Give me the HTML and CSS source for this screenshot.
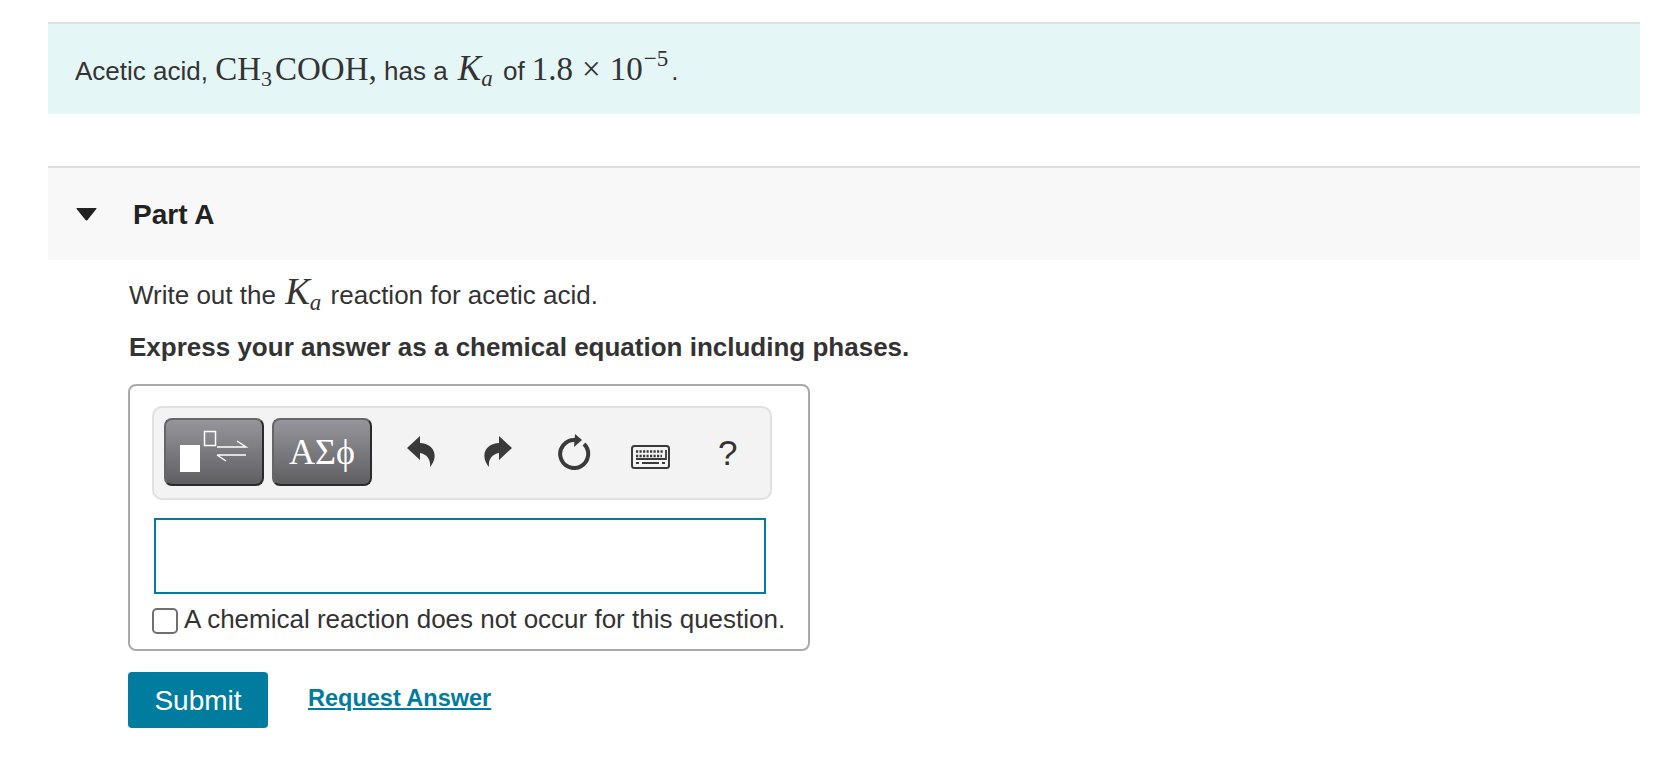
FILE: index.html
```html
<!DOCTYPE html>
<html lang="en">
<head>
<meta charset="utf-8">
<title>Acetic acid</title>
<link rel="stylesheet" href="styles.css">
</head>
<body>
<main class="page">
  <section class="intro">
    <p>Acetic acid, <span class="math">CH<sub class="three">3</sub>COOH,</span> has a <span class="math ka"><i>K<sub>a</sub></i></span> of <span class="math">1.8<span class="times">×</span>10<sup>−5</sup></span>.</p>
  </section>
  <section class="part">
    <header class="part-head">
      <svg class="caret" viewBox="0 0 21 13"><path d="M1 0H20Q21 0 20.300 1L11.500 12Q10.500 13 9.500 12L0.700 1Q0 0 1 0Z"/></svg>
      <h2>Part A</h2>
    </header>
    <div class="part-body">
      <p class="prompt">Write out the <span class="math big ka"><i>K<sub>a</sub></i></span> reaction for acetic acid.</p>
      <p class="instr">Express your answer as a chemical equation including phases.</p>
      <div class="answer">
        <div class="toolbar">
          <button class="tool" aria-label="Templates">
            <svg viewBox="0 0 96 64" width="96" height="64">
              <rect x="14" y="25" width="20" height="27" fill="#fff"/>
              <rect x="38.500" y="11.500" width="11" height="14" fill="none" stroke="#fff" stroke-width="1.500"/>
              <path d="M51 27H80L71 21M51 35H80M51 35L60 41" fill="none" stroke="#fff" stroke-width="1.500"/>
            </svg>
          </button>
          <button class="tool symbols">ΑΣϕ</button>
          <div class="actions">
            <svg class="act undo" viewBox="0 0 28 32" width="28" height="32"><path d="M0 12L13 0V7C22 7 30 14 27 24C26 27 24 30 23 31C24 24 20 18 13 17V24Z"/></svg>
            <svg class="act redo" viewBox="0 0 28 32" width="28" height="32"><path d="M28 12L15 0V7C6 7 -2 14 1 24C2 27 4 30 5 31C4 24 8 18 15 17V24Z"/></svg>
            <svg class="act reset" viewBox="0 0 33 36" width="33" height="36"><path d="M26 10A14 14 0 1 1 17 6" fill="none" stroke="#3a3a3a" stroke-width="4"/><path d="M17 0L24 6L16 13Z"/></svg>
            <svg class="kbd" viewBox="0 0 39 24" width="39" height="24">
              <rect x="1" y="1" width="37" height="22" rx="2.500" fill="none" stroke="#3a3a3a" stroke-width="2"/>
              <path d="M5 6.500H33M5 11H31" fill="none" stroke="#3a3a3a" stroke-width="2.500" stroke-dasharray="2.200 1.300"/>
              <path d="M35 5V14H5M5 18H8M11 18H28M31 18H34" fill="none" stroke="#3a3a3a" stroke-width="1.800"/>
            </svg>
            <span class="help">?</span>
          </div>
        </div>
        <div class="field"></div>
        <label class="noreact"><span class="check"></span>A chemical reaction does not occur for this question.</label>
      </div>
      <div class="submit-row">
        <button class="submit">Submit</button>
        <a class="request" href="#">Request Answer</a>
      </div>
    </div>
  </section>
</main>
</body>
</html>
```
FILE: styles.css
```css
* { box-sizing: border-box; }
html, body { margin: 0; background: #fff; }
body { height: 762px; overflow: hidden; font-family: "Liberation Sans", Arial, sans-serif; color: #333; }
.page { padding: 22px 40px 0 48px; }
p { margin: 0; }
.intro {
  height: 92px;
  background: #e5f6f7;
  border-top: 2px solid #dde3e3;
  padding-left: 27px;
  display: flex;
  align-items: center;
  font-size: 26px;
}
.math { font-family: "Liberation Serif", "Times New Roman", serif; font-size: 33px; }
.math sub { font-size: 23px; line-height: 0; vertical-align: -6px; }
.math sup { font-size: 23px; line-height: 0; vertical-align: 14px; margin-left: 1px; margin-right: 3px; }
.math .three { font-size: 22px; margin-right: 3px; }
.ka { padding: 0 3px; }
.ka i { font-size: 35px; }
.times { margin: 0 9px; }
.part { margin-top: 52px; }
.part-head {
  height: 94px;
  background: #f8f8f8;
  border-top: 2px solid #dfdfdf;
  display: flex;
  align-items: center;
  padding-left: 28px;
}
.caret { width: 21px; height: 13px; fill: #222; margin-right: 36px; }
h2 { margin: 2px 0 0; font-size: 28px; font-weight: 700; color: #222; }
.part-body { padding-left: 80px; }
.prompt { margin-top: 17px; padding-left: 1px; font-size: 26px; line-height: 36px; }
.math.big { font-size: 35px; line-height: 0; padding: 0 2px; }
.big i { font-size: 37px; }
.instr { margin-top: 16px; padding-left: 1px; font-size: 26px; font-weight: 700; line-height: 36px; }
.answer {
  width: 682px;
  height: 267px;
  margin-top: 19px;
  border: 2px solid #a9a9a9;
  border-radius: 8px;
  padding: 20px 22px 0;
}
.toolbar {
  width: 620px;
  height: 94px;
  background: #f3f3f3;
  border: 2px solid #e0e0e0;
  border-radius: 10px;
  display: flex;
  align-items: flex-start;
  padding: 10px 0 0 10px;
  gap: 8px;
}
.tool {
  width: 100px;
  height: 68px;
  padding: 0;
  border: 2px solid #2b2b2b;
  border-top-color: #666;
  border-left-color: #666;
  border-radius: 8px;
  background: linear-gradient(#96959b, #5f5f62);
  color: #fff;
  display: flex;
  align-items: center;
  justify-content: center;
}
.symbols { font-family: "Liberation Serif", serif; font-size: 36px; }
.actions { display: flex; align-items: center; height: 68px; margin-left: 27px; }
.act { fill: #3a3a3a; }
.redo { margin-left: 49px; }
.reset { margin-left: 46px; }
.kbd { margin-left: 40px; margin-top: 10px; }
.help { margin: 2px 0 0 48px; font-size: 35px; }
.field {
  width: 612px;
  height: 76px;
  margin: 18px 0 0 2px;
  border: 2px solid #007c9f;
  background: #fff;
}
.noreact { display: flex; align-items: center; margin-top: 11px; font-size: 26px; height: 28px; color: #333; }
.check {
  width: 26px;
  height: 26px;
  margin: 3px 6px 0 0;
  border: 2px solid #6f6f6f;
  border-radius: 5px;
  background: #fff;
}
.submit-row { display: flex; align-items: center; margin-top: 21px; }
.submit {
  width: 140px;
  height: 56px;
  padding: 2px 0 0;
  border: 0;
  border-radius: 4px;
  background: #007c9f;
  color: #fff;
  font: 28px "Liberation Sans", Arial, sans-serif;
}
.request {
  margin-left: 40px;
  margin-bottom: 4px;
  font-size: 23.500px;
  font-weight: 700;
  color: #007c9f;
}
```
